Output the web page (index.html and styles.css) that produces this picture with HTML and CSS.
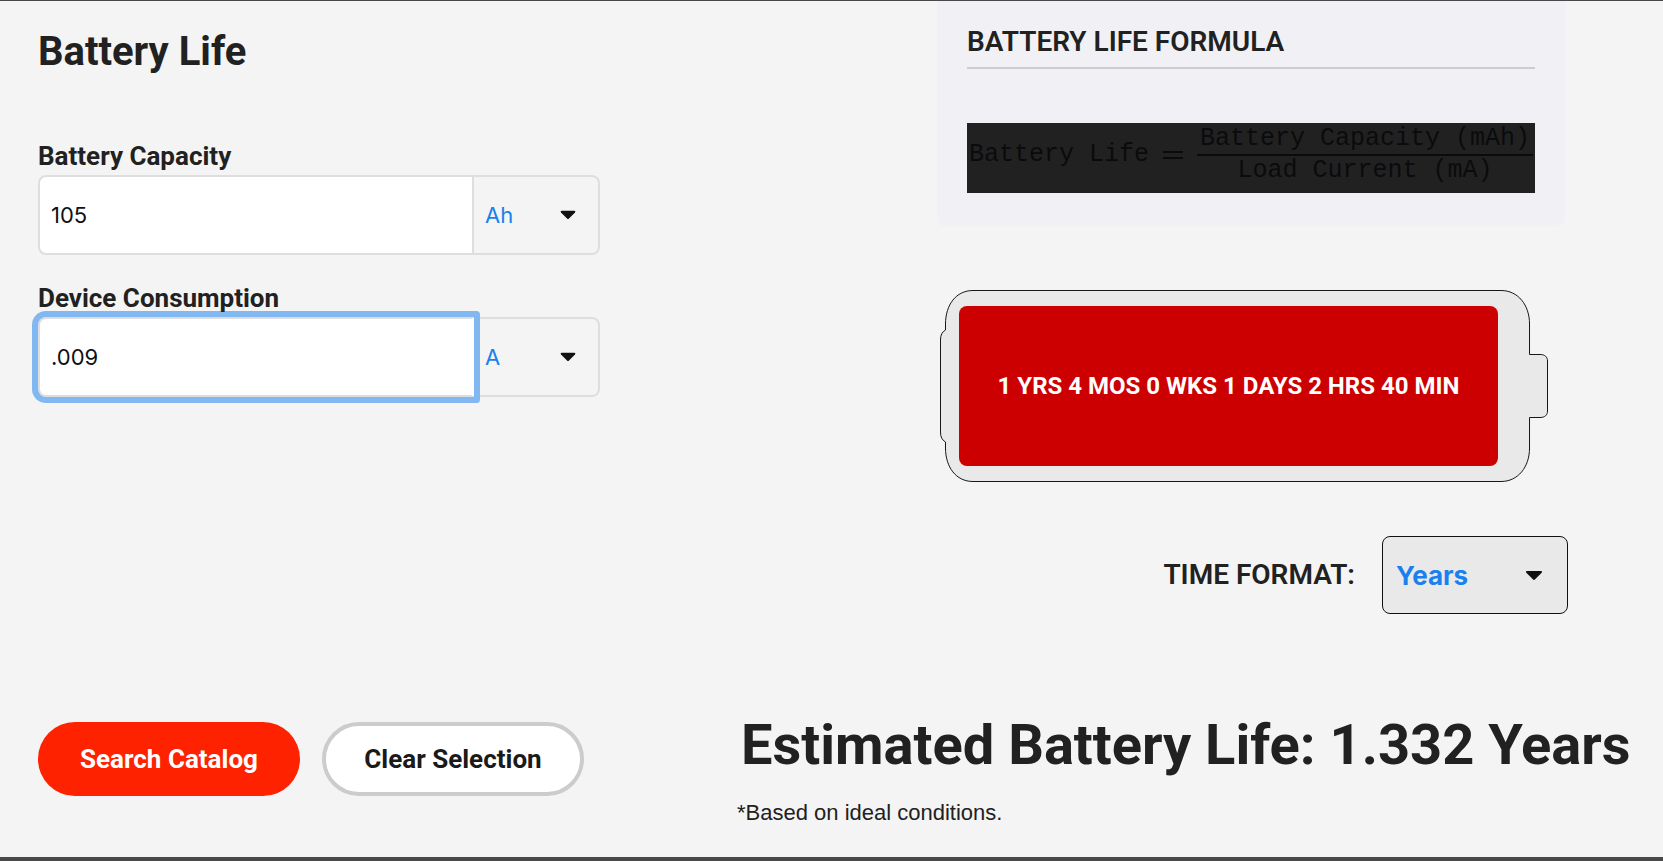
FILE: index.html
```html
<!DOCTYPE html>
<html lang="en">
<head>
<meta charset="utf-8">
<title>Battery Life</title>
<link rel="stylesheet" href="styles.css">
</head>
<body>
<main class="calculator">
  <form class="inputs">
    <h1 class="title">Battery Life</h1>
    <div class="fields">
      <div class="field">
        <label class="field-label" for="capacity">Battery Capacity</label>
        <div class="field-row">
          <input class="field-value" id="capacity" type="text" value="105">
          <div class="picker unit">
            <select class="unit-select" aria-label="Battery Capacity unit"><option>Ah</option><option>mAh</option></select>
            <svg class="caret" viewBox="0 0 16 10" aria-hidden="true"><path d="M1.500.8H14.500Q16 1 15 2.500L9 8.500Q8 9.500 7 8.500L1 2.500Q0 1 1.500.8Z"/></svg>
          </div>
        </div>
      </div>
      <div class="field">
        <label class="field-label" for="consumption">Device Consumption</label>
        <div class="field-row">
          <input class="field-value is-active" id="consumption" type="text" value=".009">
          <div class="picker unit">
            <select class="unit-select" aria-label="Device Consumption unit"><option>A</option><option>mA</option></select>
            <svg class="caret" viewBox="0 0 16 10" aria-hidden="true"><path d="M1.500.8H14.500Q16 1 15 2.500L9 8.500Q8 9.500 7 8.500L1 2.500Q0 1 1.500.8Z"/></svg>
          </div>
        </div>
      </div>
    </div>
    <div class="actions">
      <button class="button primary" type="button">Search Catalog</button>
      <button class="button secondary" type="button">Clear Selection</button>
    </div>
  </form>

  <div class="results">
    <section class="formula-card">
      <h2 class="formula-title">BATTERY LIFE FORMULA</h2>
      <div class="formula">
        <span>Battery Life</span>
        <svg class="equals" viewBox="0 0 20 8" aria-label="equals"><path d="M0 1H20M0 7H20"/></svg>
        <span class="fraction">
          <span class="numerator">Battery Capacity (mAh)</span>
          <span class="denominator">Load Current (mA)</span>
        </span>
      </div>
    </section>

    <div class="battery">
      <svg class="battery-shape" viewBox="0 0 609 192" preserveAspectRatio="none" aria-hidden="true">
        <path d="M33 .5H562C579 .5 590.500 15 590.500 34V64.500H601C606 64.500 608.500 67 608.500 71V121C608.500 125 606 127.500 601 127.500H590.500V158C590.500 177 579 191.500 562 191.500H33C16 191.500 5.500 177 5.500 158V152C2 150 .5 147 .5 142V50C.5 45 2 42 5.500 40V34C5.500 15 16 .5 33 .5Z"/>
      </svg>
      <p class="charge">1 YRS 4 MOS 0 WKS 1 DAYS 2 HRS 40 MIN</p>
    </div>

    <div class="format">
      <label class="format-label" for="format">TIME FORMAT:</label>
      <div class="picker format-picker">
        <select class="format-select" id="format"><option>Years</option><option>Months</option></select>
        <svg class="caret large" viewBox="0 0 16 10" aria-hidden="true"><path d="M1.500.8H14.500Q16 1 15 2.500L9 8.500Q8 9.500 7 8.500L1 2.500Q0 1 1.500.8Z"/></svg>
      </div>
    </div>

    <p class="estimate">Estimated Battery Life: 1.332 Years</p>
    <p class="note">*Based on ideal conditions.</p>
  </div>
</main>
</body>
</html>
```
FILE: styles.css
```css
* {
  box-sizing: border-box;
}

body {
  margin: 0;
  background: #f4f4f4;
  color: #212121;
  font-family: Roboto, "Liberation Sans", sans-serif;
}

h1, h2, p {
  margin: 0;
}

.calculator {
  display: grid;
  grid-template-columns: minmax(0, 562fr) minmax(0, 891fr);
  column-gap: 137px;
  min-height: 100vh;
  padding: 0 35px 0 38px;
  border-top: 1px solid #4a474a;
  border-bottom: 4px solid #4a4848;
}

.inputs {
  display: flex;
  flex-direction: column;
  padding: 27px 0 61px;
}

.title {
  font-size: 40px;
  line-height: 48px;
  font-weight: 700;
}

.fields {
  display: grid;
  gap: 27px;
  margin-top: 64px;
}

.field {
  display: grid;
  gap: 3px;
}

.field-label {
  z-index: 2;
  font-size: 26px;
  line-height: 32px;
  font-weight: 700;
}

.field-row {
  display: flex;
  height: 80px;
}

.field-value {
  flex: 1;
  min-width: 0;
  padding: 0 11px;
  border: 2px solid #dedede;
  border-radius: 8px 0 0 8px;
  background: #fff;
  color: #111;
  font-family: Inter, sans-serif;
  font-size: 22px;
}

.field-value.is-active {
  z-index: 1;
  border-right-color: #fff;
  border-radius: 8px 1px 1px 8px;
  box-shadow: 0 0 0 6px #82b8f1;
}

.picker {
  display: grid;
  grid-template-columns: 1fr auto;
  align-items: center;
}

.picker select {
  grid-area: 1 / 1 / 2 / 3;
  width: 100%;
  height: 100%;
  appearance: none;
  color: #1a80ee;
  font-family: Inter, sans-serif;
}

.unit {
  width: 126px;
}

.unit-select {
  padding: 0 11px;
  border: 2px solid #dedede;
  border-left: 0;
  border-radius: 0 8px 8px 0;
  background: #f4f4f4;
  font-size: 22px;
}

.caret {
  grid-area: 1 / 2;
  width: 16px;
  height: 10px;
  margin-right: 24px;
  fill: #111;
  pointer-events: none;
}

.caret.large {
  width: 18px;
  height: 11px;
  margin-right: 25px;
}

.actions {
  display: flex;
  gap: 22px;
  margin-top: auto;
}

.button {
  width: 262px;
  height: 74px;
  padding: 0;
  border: 0;
  border-radius: 37px;
  font-family: inherit;
  font-size: 26px;
  font-weight: 700;
}

.primary {
  background: #ff2200;
  color: #fff;
}

.secondary {
  border: 4px solid #ccc;
  background: #fff;
  color: #1a1a1a;
}

.formula-card {
  margin: 0 63px 0 200px;
  padding: 25px 30px 33px 30px;
  border-radius: 0 0 8px 8px;
  background: #f1f1f5;
}

.formula-title {
  padding-bottom: 9px;
  border-bottom: 2px solid #cdcdd0;
  font-size: 28px;
  line-height: 32px;
  font-weight: 600;
}

.formula {
  display: flex;
  align-items: center;
  justify-content: space-between;
  height: 70px;
  margin-top: 54px;
  padding: 0 2px 6px;
  background: #212121;
  color: #0b0b0d;
  font-family: "Liberation Mono", monospace;
  font-size: 25px;
  line-height: 30px;
  white-space: nowrap;
}

.equals {
  width: 20px;
  height: 8px;
  stroke: #0b0b0d;
  stroke-width: 2;
}

.fraction {
  display: grid;
  text-align: center;
}

.numerator {
  padding: 0 3px;
  border-bottom: 2px solid #0b0b0d;
}

.battery {
  display: grid;
  grid-template-columns: 1fr;
  height: 192px;
  margin: 64px 80px 0 203px;
}

.battery-shape {
  grid-area: 1 / 1;
  width: 100%;
  height: 192px;
  fill: #e9e9e9;
  stroke: #151515;
}

.charge {
  grid-area: 1 / 1;
  display: grid;
  place-items: center;
  z-index: 1;
  margin: 16px 50px 16px 19px;
  border-radius: 8px;
  background: #cc0000;
  color: #fff;
  font-size: 24px;
  font-weight: 700;
  white-space: nowrap;
}

.format {
  display: flex;
  align-items: center;
  justify-content: flex-end;
  gap: 27px;
  margin: 54px 60px 0 0;
}

.format-label {
  font-size: 28px;
  line-height: 32px;
  font-weight: 600;
}

.format-picker {
  width: 186px;
  height: 78px;
}

.format-select {
  padding: 0 13px;
  border: 1px solid #111;
  border-radius: 8px;
  background: #e9e9e9;
  font-size: 26px;
  font-weight: 700;
}

.estimate {
  margin-top: 99px;
  padding-left: 4px;
  font-size: 56px;
  line-height: 64px;
  font-weight: 700;
  white-space: nowrap;
}

.note {
  margin-top: 23px;
  font-family: "Liberation Sans", Arial, sans-serif;
  font-size: 22px;
  line-height: 26px;
}
```
